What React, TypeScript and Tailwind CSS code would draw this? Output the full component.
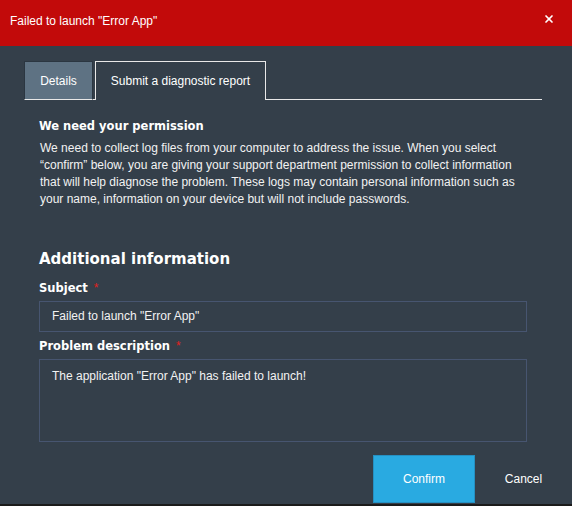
import { X } from 'lucide-react'

const sans = "font-['Liberation_Sans',Arial,sans-serif]"
const heavy = "font-['DejaVu_Sans',sans-serif] font-bold"

function Label({ text }: { text: string }) {
  return (
    <div className={`${heavy} text-[11.5px] leading-[14px] text-white`}>
      {text}
      <span className={`${sans} ml-[6px] font-normal text-[12px] text-[#e3201d]`}>*</span>
    </div>
  )
}

export default function App() {
  return (
    <div className={`${sans} flex h-[506px] w-[572px] flex-col bg-[#343f4a] text-[12px] text-[#f2f2f2]`}>
      {/* title bar */}
      <div className="flex h-[46px] shrink-0 items-center justify-between bg-[#c20a0a] pb-[4px] pl-[10px] pr-[17px]">
        <span className="text-[12px] leading-[14px] text-white">Failed to launch "Error App"</span>
        <X className="mb-[4px] h-[12px] w-[12px] text-white" strokeWidth={3.4} />
      </div>

      {/* tabs */}
      <div className="ml-[24px] mt-[15px] flex w-[518px]">
        <div className="flex h-[39px] w-[69px] items-center justify-center border-l border-t border-r border-b border-[#2b3641] border-r-dotted border-b-[#e8e8e8] bg-[#5e7283] text-white">
          Details
        </div>
        <div className="w-[2px] border-b border-[#e8e8e8]" />
        <div className="flex h-[39px] w-[171px] items-center justify-center border-l border-r border-t border-[#e8e8e8] pb-[1px] text-white">
          Submit a diagnostic report
        </div>
        <div className="flex-1 border-b border-[#e8e8e8]" />
      </div>

      {/* content */}
      <div className="flex flex-1 flex-col pl-[39px] pt-[19px]">
        <div className="w-[488px]">
          <div className={`${heavy} text-[11.5px] leading-[14px] text-white`}>We need your permission</div>
          <p className="mt-[7px] pl-[1px] leading-[17px]">
            We need to collect log files from your computer to address the issue. When you select “confirm” below, you
            are giving your support department permission to collect information that will help diagnose the problem.
            These logs may contain personal information such as your name, information on your device but will not
            include passwords.
          </p>

          <div className={`${heavy} mt-[42px] text-[15px] leading-[18px] text-white`}>Additional information</div>

          <div className="mt-[13px]">
            <Label text="Subject" />
          </div>
          <div className="mt-[6px] flex h-[31px] items-center border border-[#475570] pl-[12px] leading-[17px]">
            Failed to launch "Error App"
          </div>

          <div className="mt-[7px]">
            <Label text="Problem description" />
          </div>
          <div className="mt-[6px] h-[83px] border border-[#475570] pl-[12px] pt-[8px] leading-[17px]">
            The application "Error App" has failed to launch!
          </div>
        </div>

        <div className="mt-[13px] flex justify-end">
          <button className="h-[48px] w-[102px] border border-[#2590c2] bg-[#29aae1] text-white">Confirm</button>
          <button className="h-[48px] w-[97px] text-white">Cancel</button>
        </div>
      </div>
      <div className="h-[2px] shrink-0 bg-[#1b1b1b]" />
    </div>
  )
}
